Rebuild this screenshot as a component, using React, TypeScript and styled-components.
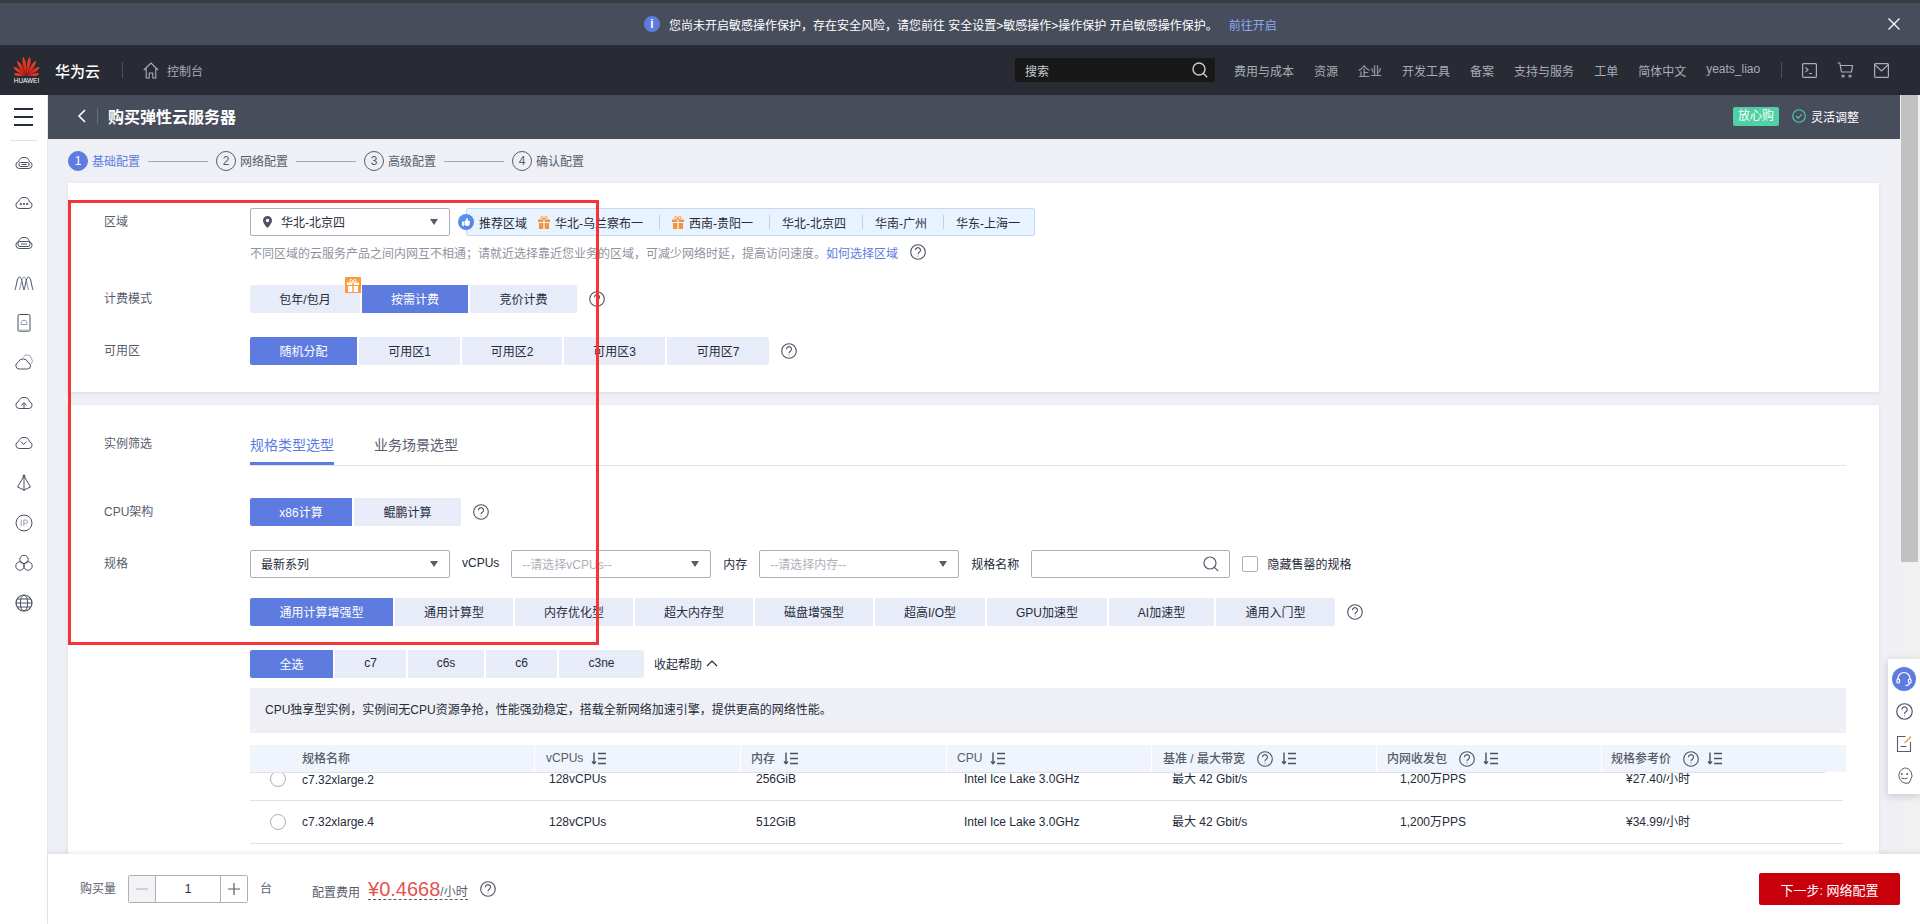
import React from 'react';
import { FaThumbsUp } from 'react-icons/fa';
import styled, { createGlobalStyle } from 'styled-components';

const GlobalStyle = createGlobalStyle`
  html, body {
    margin: 0;
    padding: 0;
    height: 924px;
    overflow: hidden;
    background: #ffffff;
    font-family: "Liberation Sans", "Noto Sans CJK SC", sans-serif;
    font-size: 12px;
    color: #252b3a;
  }
  * { box-sizing: border-box; }
`;

const BLUE = '#5e7ce0';

const CloudOutline = () => (
  <path d="M5.2 15.5h9.6a3.4 3.4 0 0 0 .7-6.7 5.6 5.6 0 0 0-10.9-.2 3.5 3.5 0 0 0 .6 6.9z" />
);

const SideIcon: React.FC<{ children?: React.ReactNode }> = ({ children }) => (
  <svg width='20' height='20' viewBox='0 0 20 20' fill='none' stroke='#4a5060' strokeWidth='1'>
    {children}
  </svg>
);

const sideIcons: React.ReactNode[] = [
  <SideIcon key='a'>
    <CloudOutline />
    <rect x='5' y='9.5' width='10' height='4' rx='1.5' />
    <path d="M7.5 11.5h5" />
  </SideIcon>,
  <SideIcon key='b'>
    <CloudOutline />
    <circle cx='6.8' cy='11' r='.7' fill='#4a5060' />
    <circle cx='10' cy='11' r='.7' fill='#4a5060' />
    <circle cx='13.2' cy='11' r='.7' fill='#4a5060' />
  </SideIcon>,
  <SideIcon key='c'>
    <CloudOutline />
    <rect x='4' y='8.5' width='12' height='5' rx='2' />
    <path d="M7 11h6" />
  </SideIcon>,
  <SideIcon key='d'>
    <path d="M1 17C2.500 13 3 4 5.500 4S8.500 13 10 17" />
    <path d="M5.500 17C7 13 7.500 4 10 4S13 13 14.500 17" stroke='#7f8db0' />
    <path d="M10 17c1.500-4 2-13 4.500-13S17.500 13 19 17" />
  </SideIcon>,
  <SideIcon key='e'>
    <rect x='4' y='1.5' width='12' height='17' rx='1.5' />
    <path d="M4.500 17.500h11" stroke='#b8bcc6' strokeWidth='2' />
    <path d="M7 11.500h6v-1.200a3 3 0 0 0-6 0z" stroke='#8fa0c0' />
  </SideIcon>,
  <SideIcon key='f'>
    <path d="M5 16h8.500a3.300 3.300 0 0 0 .5-6.500 5.200 5.200 0 0 0-9.800-.3A3.500 3.500 0 0 0 5 16z" />
    <path d="M9 4.500a4.500 4.500 0 0 1 8.600 1.500 3.200 3.200 0 0 1-1 5" stroke='#9aa0ad' />
  </SideIcon>,
  <SideIcon key='g'>
    <CloudOutline />
    <path d="M10 15.500v-5M7.500 12.500l2.500-2.800 2.500 2.800" />
  </SideIcon>,
  <SideIcon key='h'>
    <CloudOutline />
    <path d="M9.500 11.500l3-3M7 8.500l2.500 3" />
  </SideIcon>,
  <SideIcon key='i'>
    <path d="M10 2v16M10 3L3.500 14l6.500 3 6.500-3z" />
    <circle cx='10' cy='3' r='1' fill='#4a5060' />
  </SideIcon>,
  <SideIcon key='j'>
    <circle cx='10' cy='10' r='8' />
    <path d="M7.200 7v6M9.800 13V7h2a1.700 1.700 0 0 1 0 3.400h-2" stroke='#9aa0ad' />
  </SideIcon>,
  <SideIcon key='k'>
    <circle cx='10' cy='6.5' r='4.2' />
    <circle cx='6' cy='13' r='4.2' />
    <circle cx='14' cy='13' r='4.2' />
  </SideIcon>,
  <SideIcon key='l'>
    <circle cx='10' cy='10' r='8' strokeWidth='1.2' />
    <ellipse cx='10' cy='10' rx='3.6' ry='8' />
    <path d="M2 10h16M3 6h14M3 14h14" />
  </SideIcon>,
];

const logoPetals = [
  { deg: -80, len: 12 },
  { deg: -56, len: 15 },
  { deg: -32, len: 17 },
  { deg: -10, len: 18.5 },
  { deg: 10, len: 18.5 },
  { deg: 32, len: 17 },
  { deg: 56, len: 15 },
  { deg: 80, len: 12 },
];

const HelpIcon: React.FC<{ size?: number }> = ({ size = 16 }) => (
  <HelpSvg width={size} height={size} viewBox='0 0 16 16' fill='none' stroke='#4d5261' strokeWidth='1.1'>
    <circle cx='8' cy='8' r='7.3' />
    <path d="M5.500 6.200a2.500 2.500 0 1 1 3.800 2.100c-.9.500-1.300 1-1.300 2" />
    <circle cx='8' cy='12' r='.5' fill='#4d5261' stroke='none' />
  </HelpSvg>
);

const SortIcon = () => (
  <SortSvg width='15' height='13' viewBox='0 0 15 13' fill='none' stroke='#4d5261' strokeWidth='1.4'>
    <path d="M3 .5v11M1 9.500l2 2.300 2-2.300" />
    <path d="M7 1.500h8M7 6.500h8M7 11.500h8" />
  </SortSvg>
);

const GiftIcon: React.FC<{ color?: string }> = ({ color = '#f7923a' }) => (
  <svg width='12' height='13' viewBox='0 0 12 13' fill={color}>
    <path d="M0 3.500h5.300V6H0zM6.700 3.500H12V6H6.700zM1 7h4.300v6H1zM6.700 7H11v6H6.700z" />
    <path d="M6 3.200C4.500 3.200 2.800 2.800 2.800 1.500 2.800.4 4 0 4.700.5 5.500 1 6 2.200 6 3.200zm0 0c1.500 0 3.200-.4 3.200-1.700C9.200.4 8 0 7.300.5 6.500 1 6 2.200 6 3.200z" fill='none' stroke={color} />
  </svg>
);

const Caret = styled.span`
  width: 0;
  height: 0;
  margin: 2px 0 0 auto;
  border-left: 4px solid transparent;
  border-right: 4px solid transparent;
  border-top: 6px solid #575d6c;
`;

const SelectBox: React.FC<{ width: number; placeholder?: boolean; icon?: boolean; children: React.ReactNode }> = ({
  width,
  placeholder,
  icon,
  children,
}) => (
  <Select $width={width} $placeholder={placeholder}>
    {icon && (
      <PinIcon width='9' height='12' viewBox='0 0 9 12'>
        <path fillRule='evenodd' fill='#4d5261' d="M4.500 0A4.500 4.500 0 0 0 0 4.500C0 7.500 4.500 12 4.500 12S9 7.500 9 4.500A4.500 4.500 0 0 0 4.500 0zm0 6.200a1.700 1.700 0 1 1 0-3.400 1.700 1.700 0 0 1 0 3.400z" />
      </PinIcon>
    )}
    {children}
    <Caret />
  </Select>
);

interface OptionGroupProps {
  items: [string, number][];
  active?: number;
}

const OptionGroup: React.FC<OptionGroupProps> = ({ items, active = 0 }) => (
  <Options>
    {items.map(([label, width], i) => (
      <OptionButton key={label} $width={width} $active={i === active}>
        {label}
      </OptionButton>
    ))}
  </Options>
);

const columns = [
  { title: '规格名称', pad: 52, sort: false, help: false },
  { title: 'vCPUs', pad: 11, sort: true, help: false },
  { title: '内存', pad: 10, sort: true, help: false },
  { title: 'CPU', pad: 10, sort: true, help: false },
  { title: '基准 / 最大带宽', pad: 11, sort: true, help: true },
  { title: '内网收发包', pad: 10, sort: true, help: true },
  { title: '规格参考价', pad: 9, sort: true, help: true },
];

const rows = [
  { name: 'c7.32xlarge.2', memory: '256GiB', price: '¥27.40/小时', clipped: true },
  { name: 'c7.32xlarge.4', memory: '512GiB', price: '¥34.99/小时', clipped: false },
];

const steps = ['基础配置', '网络配置', '高级配置', '确认配置'];
const navItems = ['费用与成本', '资源', '企业', '开发工具', '备案', '支持与服务', '工单', '简体中文', 'yeats_liao'];

export default function App() {
  return (
    <Page>
      <GlobalStyle />
      <TopStrip />
      <Notice>
        <InfoDot>i</InfoDot>
        您尚未开启敏感操作保护，存在安全风险，请您前往 安全设置&gt;敏感操作&gt;操作保护 开启敏感操作保护。
        <NoticeLink>前往开启</NoticeLink>
        <CloseIcon width='12' height='12' viewBox='0 0 12 12' stroke='#ffffff' strokeWidth='1.3'>
          <path d="M.5.500l11 11M11.500.500l-11 11" />
        </CloseIcon>
      </Notice>
      <Header>
        <Logo>
          <svg width='27' height='20' viewBox='0 0 27 20'>
            <defs>
              <linearGradient id='petal' x1='0' y1='0' x2='0' y2='1'>
                <stop offset='0' stopColor='#f0492f' />
                <stop offset='1' stopColor='#c9140f' />
              </linearGradient>
            </defs>
            {logoPetals.map(({ deg, len }) => (
              <path
                key={deg}
                transform={`rotate(${deg} 13.5 20) translate(0 -1)`}
                d={`M13.5 20.5C11.4 ${20 - len * 0.55} 11.4 ${20 - len * 0.75} 13.5 ${20 - len}C15.6 ${20 - len * 0.75} 15.6 ${20 - len * 0.55} 13.5 20.5z`}
                fill='url(#petal)'
              />
            ))}
          </svg>
          <LogoWord>HUAWEI</LogoWord>
        </Logo>
        <Brand>华为云</Brand>
        <HeaderRule />
        <svg width='16' height='17' viewBox='0 0 16 17' fill='none' stroke='#a9adb8' strokeWidth='1.1'>
          <path d="M.8 8L8 1l7.200 7M3.200 6v10h3v-5h3.600v5h3V6" />
        </svg>
        <ConsoleLink>控制台</ConsoleLink>
        <HeaderSearch>
          搜索
          <svg width='16' height='16' viewBox='0 0 16 16' fill='none' stroke='#c9ccd3' strokeWidth='1.4'>
            <circle cx='7' cy='7' r='6' />
            <path d="M11.200 11.200l4 4" />
          </svg>
        </HeaderSearch>
        <HeaderNav>
          {navItems.map((item) => (
            <span key={item}>{item}</span>
          ))}
        </HeaderNav>
        <HeaderRuleRight />
        <HeaderIcons>
          <svg width='15' height='15' viewBox='0 0 15 15' fill='none' stroke='#a9adb8' strokeWidth='1.2'>
            <rect x='.6' y='.6' width='13.8' height='13.8' rx='1' />
            <path d="M3.500 4.500l2.500 2.300-2.500 2.300M7 10.500h3" />
          </svg>
          <svg width='17' height='16' viewBox='0 0 17 16' fill='none' stroke='#a9adb8' strokeWidth='1.2'>
            <path d="M.5 1h2.300l1.700 9h10l1-6.500H3.500" />
            <circle cx='6' cy='14' r='1' />
            <circle cx='13' cy='14' r='1' />
          </svg>
          <svg width='15' height='15' viewBox='0 0 15 15' fill='none' stroke='#a9adb8' strokeWidth='1.2'>
            <rect x='.6' y='.6' width='13.8' height='13.8' rx='1' />
            <path d="M.6 1.500l6.900 6.500 6.900-6.500" />
          </svg>
        </HeaderIcons>
      </Header>
      <Body>
        <Sidebar>
          <MenuButton>
            <MenuLine />
            <MenuLine />
            <MenuLine />
          </MenuButton>
          <SideList>{sideIcons}</SideList>
        </Sidebar>
        <Workspace>
          <Upper>
            <Main>
              <TitleBar>
                <svg width='9' height='14' viewBox='0 0 9 14' fill='none' stroke='#ffffff' strokeWidth='1.6'>
                  <path d="M8 1L2 7l6 6" />
                </svg>
                <TitleRule />
                <Title>购买弹性云服务器</Title>
                <SafeBadge>放心购</SafeBadge>
                <svg width='14' height='14' viewBox='0 0 14 14' fill='none' stroke='#4fd1a5' strokeWidth='1.1'>
                  <circle cx='7' cy='7' r='6.3' />
                  <path d="M4 7l2.200 2.200L10 5" />
                </svg>
                <FlexAdjust>灵活调整</FlexAdjust>
              </TitleBar>
              <Content>
                <Stepper>
                  {steps.map((step, i) => (
                    <React.Fragment key={step}>
                      <StepDot $active={i === 0}>{i + 1}</StepDot>
                      <StepLabel $active={i === 0}>{step}</StepLabel>
                      {i < steps.length - 1 && <StepLine />}
                    </React.Fragment>
                  ))}
                </Stepper>
                <Card>
                  <FormRow>
                    <FieldLabel>区域</FieldLabel>
                    <SelectBox width={200} icon>
                      华北-北京四
                    </SelectBox>
                    <ThumbDot>
                      <FaThumbsUp size={8} color='#ffffff' />
                    </ThumbDot>
                    <Recommend>
                      <RecommendTitle>推荐区域</RecommendTitle>
                      <GiftIcon />
                      <RegionText>华北-乌兰察布一</RegionText>
                      <RegionRule />
                      <GiftIcon />
                      <RegionText>西南-贵阳一</RegionText>
                      <RegionRule />
                      <RegionText>华北-北京四</RegionText>
                      <RegionRule />
                      <RegionText>华南-广州</RegionText>
                      <RegionRule />
                      <RegionText>华东-上海一</RegionText>
                    </Recommend>
                  </FormRow>
                  <HintRow>
                    不同区域的云服务产品之间内网互不相通；请就近选择靠近您业务的区域，可减少网络时延，提高访问速度。
                    <HintLink>如何选择区域</HintLink>
                    <HelpIcon />
                  </HintRow>
                  <FormRow $top={23}>
                    <FieldLabel>计费模式</FieldLabel>
                    <GiftAnchor>
                      <OptionGroup
                        active={1}
                        items={[
                          ['包年/包月', 110],
                          ['按需计费', 106],
                          ['竞价计费', 107],
                        ]}
                      />
                      <GiftBadge>
                        <GiftIcon color='#ffffff' />
                      </GiftBadge>
                    </GiftAnchor>
                    <HelpIcon />
                  </FormRow>
                  <FormRow $top={24}>
                    <FieldLabel>可用区</FieldLabel>
                    <OptionGroup
                      items={[
                        ['随机分配', 107],
                        ['可用区1', 101],
                        ['可用区2', 100],
                        ['可用区3', 101],
                        ['可用区7', 102],
                      ]}
                    />
                    <HelpIcon />
                  </FormRow>
                </Card>
                <ClippedCard>
                  <TabRow>
                    <TabLabel>实例筛选</TabLabel>
                    <Tabs>
                      <Tab $active>规格类型选型</Tab>
                      <Tab>业务场景选型</Tab>
                    </Tabs>
                  </TabRow>
                  <FormRow $top={32}>
                    <FieldLabel>CPU架构</FieldLabel>
                    <OptionGroup
                      items={[
                        ['x86计算', 102],
                        ['鲲鹏计算', 107],
                      ]}
                    />
                    <HelpIcon />
                  </FormRow>
                  <FormRow $top={24}>
                    <FieldLabel>规格</FieldLabel>
                    <SelectBox width={200}>最新系列</SelectBox>
                    <InlineLabel>vCPUs</InlineLabel>
                    <SelectBox width={200} placeholder>
                      --请选择vCPUs--
                    </SelectBox>
                    <InlineLabel>内存</InlineLabel>
                    <SelectBox width={200} placeholder>
                      --请选择内存--
                    </SelectBox>
                    <InlineLabel>规格名称</InlineLabel>
                    <SearchInput>
                      <svg width='16' height='16' viewBox='0 0 16 16' fill='none' stroke='#575d6c' strokeWidth='1.2'>
                        <circle cx='7' cy='7' r='6' />
                        <path d="M11.200 11.200l4 4" />
                      </svg>
                    </SearchInput>
                    <CheckBox />
                    <InlineText>隐藏售罄的规格</InlineText>
                  </FormRow>
                  <FormRow $top={20}>
                    <FieldLabel />
                    <OptionGroup
                      items={[
                        ['通用计算增强型', 143],
                        ['通用计算型', 118],
                        ['内存优化型', 118],
                        ['超大内存型', 118],
                        ['磁盘增强型', 118],
                        ['超高I/O型', 110],
                        ['GPU加速型', 120],
                        ['AI加速型', 105],
                        ['通用入门型', 119],
                      ]}
                    />
                    <HelpIcon />
                  </FormRow>
                  <FormRow $top={24}>
                    <FieldLabel />
                    <OptionGroup
                      items={[
                        ['全选', 83],
                        ['c7', 71],
                        ['c6s', 76],
                        ['c6', 71],
                        ['c3ne', 85],
                      ]}
                    />
                    <CollapseLink>
                      收起帮助
                      <svg width='12' height='7' viewBox='0 0 12 7' fill='none' stroke='#252b3a' strokeWidth='1.2'>
                        <path d="M1 6l5-5 5 5" />
                      </svg>
                    </CollapseLink>
                  </FormRow>
                  <InfoBox>CPU独享型实例，实例间无CPU资源争抢，性能强劲稳定，搭载全新网络加速引擎，提供更高的网络性能。</InfoBox>
                  <Table>
                    <TableHead>
                      {columns.map((col) => (
                        <HeadCell key={col.title} $pad={col.pad}>
                          {col.title}
                          {col.help && <HelpIcon />}
                          {col.sort && <SortIcon />}
                        </HeadCell>
                      ))}
                    </TableHead>
                    <HeadRule />
                    {rows.map((row) => (
                      <TableRow key={row.name} $clipped={row.clipped}>
                        <NameCell>
                          <Radio $clipped={row.clipped} />
                          {row.name}
                        </NameCell>
                        <BodyCell $pad={15}>128vCPUs</BodyCell>
                        <BodyCell $pad={16}>{row.memory}</BodyCell>
                        <BodyCell $pad={18}>Intel Ice Lake 3.0GHz</BodyCell>
                        <BodyCell $pad={21}>最大 42 Gbit/s</BodyCell>
                        <BodyCell $pad={24}>1,200万PPS</BodyCell>
                        <BodyCell $pad={25}>{row.price}</BodyCell>
                      </TableRow>
                    ))}
                  </Table>
                </ClippedCard>
              </Content>
            </Main>
            <ScrollTrack>
              <ScrollThumb />
            </ScrollTrack>
          </Upper>
          <Footer>
            <FooterLabel>购买量</FooterLabel>
            <Quantity>
              <QuantityButton $disabled>
                <svg width='12' height='2' viewBox='0 0 12 2' stroke='#adb0b8'>
                  <path d="M0 1h12" />
                </svg>
              </QuantityButton>
              <QuantityValue>1</QuantityValue>
              <QuantityButton>
                <svg width='12' height='12' viewBox='0 0 12 12' stroke='#575d6c' strokeWidth='1.2'>
                  <path d="M0 6h12M6 0v12" />
                </svg>
              </QuantityButton>
            </Quantity>
            <UnitLabel>台</UnitLabel>
            <CostLabel>配置费用</CostLabel>
            <Cost>
              <CostValue>¥0.4668</CostValue>
              <CostUnit>/小时</CostUnit>
            </Cost>
            <HelpIcon />
            <NextButton>下一步: 网络配置</NextButton>
          </Footer>
        </Workspace>
      </Body>
      <FloatPanel>
        <HeadsetDot>
          <svg width='16' height='16' viewBox='0 0 16 16' fill='none' stroke='#ffffff' strokeWidth='1.2'>
            <path d="M2 9V7.500a6 6 0 0 1 12 0V9" />
            <rect x='1' y='8' width='2.5' height='4' rx='1' />
            <rect x='12.5' y='8' width='2.5' height='4' rx='1' />
            <path d="M13.500 12c0 1.800-2 2.500-4 2.500" />
          </svg>
        </HeadsetDot>
        <HelpIcon size={17} />
        <svg width='16' height='17' viewBox='0 0 16 17' fill='none' stroke='#575d6c' strokeWidth='1.1'>
          <path d="M14.500 7v9.500h-13V1.500h8" />
          <path d="M15 1.500L8.500 8" stroke='#e8903c' />
          <path d="M4.500 11.500h6" />
        </svg>
        <svg width='17' height='17' viewBox='0 0 17 17' fill='none' stroke='#575d6c' strokeWidth='1'>
          <path d="M8.500 1a7.500 7.500 0 0 1 6 12l-1.500 3a7.500 7.500 0 1 1-4.500-15z" />
          <circle cx='5.8' cy='7' r='.6' fill='#575d6c' />
          <circle cx='11.2' cy='7' r='.6' fill='#575d6c' />
          <path d="M5.500 11c1.800 1 4.200 1 6 0" />
        </svg>
      </FloatPanel>
      <Annotation />
    </Page>
  );
}

const Page = styled.div`
  position: relative;
  display: flex;
  flex-direction: column;
  width: 1920px;
  height: 924px;
  overflow: hidden;
`;

const TopStrip = styled.div`
  height: 3px;
  background: #3a3b3f;
`;

const Notice = styled.div`
  position: relative;
  display: flex;
  align-items: center;
  height: 42px;
  padding-left: 644px;
  background: #484d5c;
  color: #ffffff;
`;

const InfoDot = styled.span`
  width: 16px;
  height: 16px;
  margin-right: 9px;
  border-radius: 50%;
  background: ${BLUE};
  color: #ffffff;
  font-weight: 700;
  line-height: 16px;
  text-align: center;
`;

const NoticeLink = styled.a`
  margin-left: 11px;
  color: #8ea9f5;
`;

const CloseIcon = styled.svg`
  position: absolute;
  top: 15px;
  left: 1888px;
`;

const Header = styled.header`
  display: flex;
  align-items: center;
  height: 50px;
  padding-left: 13px;
  background: #282b33;
  color: #a9adb8;
`;

const Logo = styled.div`
  display: flex;
  flex-direction: column;
  align-items: center;
  width: 27px;
`;

const LogoWord = styled.span`
  margin-top: 1px;
  color: #ffffff;
  font-size: 6.4px;
  line-height: 7px;
  white-space: nowrap;
`;

const Brand = styled.span`
  margin-left: 15px;
  color: #ffffff;
  font-size: 15px;
  font-weight: 500;
`;

const HeaderRule = styled.span`
  width: 1px;
  height: 16px;
  margin: 0 20px 0 22px;
  background: #4a4e5a;
`;

const ConsoleLink = styled.span`
  margin-left: 8px;
`;

const HeaderSearch = styled.div`
  display: flex;
  align-items: center;
  justify-content: space-between;
  width: 200px;
  height: 24px;
  margin-left: 812px;
  padding: 0 7px 0 10px;
  border-radius: 2px;
  background: #181818;
  color: #c9ccd3;
`;

const HeaderNav = styled.nav`
  display: flex;
  gap: 20px;
  margin-left: 19px;
  white-space: nowrap;
`;

const HeaderRuleRight = styled.span`
  width: 1px;
  height: 16px;
  margin: 0 20px 0 21px;
  background: #4a4e5a;
`;

const HeaderIcons = styled.div`
  display: flex;
  align-items: center;
  gap: 20px;
`;

const Body = styled.div`
  display: flex;
  flex: 1;
  min-height: 0;
`;

const Sidebar = styled.aside`
  flex: none;
  width: 48px;
  border-right: 1px solid #e6e8ef;
  background: #ffffff;
`;

const MenuButton = styled.div`
  display: flex;
  flex-direction: column;
  gap: 6px;
  height: 46px;
  margin: 0 10px;
  padding: 13px 4px 0;
  border-bottom: 1px solid #dfe1e6;
`;

const MenuLine = styled.span`
  height: 2px;
  background: #252b3a;
`;

const SideList = styled.div`
  display: flex;
  flex-direction: column;
  align-items: center;
  gap: 20px;
  padding-top: 12px;
`;

const Workspace = styled.div`
  display: flex;
  flex: 1;
  flex-direction: column;
  min-width: 0;
`;

const Upper = styled.div`
  display: flex;
  flex: 1;
  min-height: 0;
`;

const Main = styled.main`
  display: flex;
  flex: 1;
  flex-direction: column;
  min-width: 0;
`;

const ScrollTrack = styled.div`
  flex: none;
  width: 20px;
  padding: 0 2px 0 1px;
  background: #f1f1f1;
`;

const ScrollThumb = styled.div`
  height: 467px;
  background: #c1c1c1;
`;

const TitleBar = styled.div`
  display: flex;
  flex: none;
  align-items: center;
  height: 44px;
  padding: 0 0 2px 29px;
  background: #484d5c;
  color: #ffffff;
`;

const TitleRule = styled.span`
  width: 1px;
  height: 16px;
  margin: 0 10px 0 11px;
  background: #6b7080;
`;

const Title = styled.h1`
  margin: 0 0 1px;
  font-size: 16px;
  font-weight: 700;
`;

const SafeBadge = styled.span`
  width: 46px;
  height: 19px;
  margin: 0 13px 0 auto;
  border-radius: 2px;
  background: #4fd1a5;
  line-height: 19px;
  text-align: center;
`;

const FlexAdjust = styled.span`
  margin: 0 41px 0 5px;
`;

const Content = styled.div`
  flex: 1;
  min-height: 0;
  padding: 0 21px 0 20px;
  overflow: hidden;
  background: #eef0f5;
`;

const Stepper = styled.div`
  display: flex;
  align-items: center;
  height: 44px;
`;

const StepDot = styled.span<{ $active?: boolean }>`
  width: 20px;
  height: 20px;
  border: 1px solid ${(p) => (p.$active ? BLUE : '#575d6c')};
  border-radius: 50%;
  background: ${(p) => (p.$active ? BLUE : 'transparent')};
  color: ${(p) => (p.$active ? '#ffffff' : '#575d6c')};
  line-height: 18px;
  text-align: center;
`;

const StepLabel = styled.span<{ $active?: boolean }>`
  margin-left: 4px;
  padding-bottom: 2px;
  color: ${(p) => (p.$active ? BLUE : '#575d6c')};
`;

const StepLine = styled.span`
  width: 60px;
  height: 1px;
  margin: 0 8px;
  background: #a5a8b3;
`;

const Card = styled.section`
  padding: 25px 33px 27px 36px;
  background: #ffffff;
  box-shadow: 0 1px 3px rgba(37, 43, 58, 0.1);
`;

const ClippedCard = styled(Card)`
  height: 600px;
  margin-top: 13px;
  padding-top: 20px;
`;

const FormRow = styled.div<{ $top?: number }>`
  display: flex;
  align-items: center;
  margin-top: ${(p) => p.$top ?? 0}px;
  color: #252b3a;
`;

const FieldLabel = styled.label`
  flex: none;
  width: 146px;
  padding-bottom: 4px;
  color: #575d6c;
`;

const Select = styled.div<{ $width: number; $placeholder?: boolean }>`
  display: flex;
  flex: none;
  align-items: center;
  width: ${(p) => p.$width}px;
  height: 28px;
  padding: 0 11px 2px 10px;
  border: 1px solid #adb0b8;
  border-radius: 2px;
  background: #ffffff;
  color: ${(p) => (p.$placeholder ? '#adb0b8' : '#252b3a')};
`;

const PinIcon = styled.svg`
  margin: 2px 9px 0 2px;
`;

const ThumbDot = styled.span`
  position: relative;
  z-index: 1;
  display: flex;
  flex: none;
  align-items: center;
  justify-content: center;
  width: 16px;
  height: 16px;
  margin-left: 8px;
  border-radius: 50%;
  background: linear-gradient(135deg, #4f9cf7, ${BLUE});
`;

const Recommend = styled.div`
  display: flex;
  align-items: center;
  width: 569px;
  height: 28px;
  margin-left: -8px;
  padding-left: 12px;
  border: 1px solid #c2d9f7;
  border-radius: 2px;
  background: #e8f3ff;
  color: #252b3a;
`;

const RecommendTitle = styled.span`
  margin-right: 11px;
`;

const RegionText = styled.span`
  margin-left: 5px;
  white-space: nowrap;
`;

const RegionRule = styled.span`
  width: 1px;
  height: 14px;
  margin: 0 12px 0 16px;
  background: #c2d0e3;

  & + span {
    margin-left: 0;
  }
`;

const HintRow = styled.div`
  display: flex;
  align-items: center;
  height: 20px;
  margin: 6px 0 0 146px;
  color: #8f939e;
  white-space: nowrap;
`;

const HintLink = styled.a`
  color: ${BLUE};
`;

const HelpSvg = styled.svg`
  flex: none;
  margin-left: 12px;
`;

const SortSvg = styled.svg`
  flex: none;
  margin-left: 8px;
`;

const GiftAnchor = styled.div`
  position: relative;
`;

const GiftBadge = styled.span`
  position: absolute;
  top: -8px;
  left: 95px;
  display: flex;
  align-items: center;
  justify-content: center;
  width: 16px;
  height: 16px;
  background: #ff9a3c;
`;

const Options = styled.div`
  display: flex;
  gap: 2px;
`;

const OptionButton = styled.button<{ $width: number; $active?: boolean }>`
  flex: none;
  width: ${(p) => p.$width}px;
  height: 28px;
  padding: 0 0 2px;
  border: 0;
  background: ${(p) => (p.$active ? BLUE : '#e8ecf8')};
  color: ${(p) => (p.$active ? '#ffffff' : '#252b3a')};
  font: inherit;

  &:first-child {
    border-radius: 2px 0 0 2px;
  }

  &:last-child {
    border-radius: 0 2px 2px 0;
  }
`;

const TabRow = styled.div`
  display: flex;
`;

const TabLabel = styled(FieldLabel)`
  padding: 9px 0 0;
`;

const Tabs = styled.div`
  display: flex;
  flex: 1;
  gap: 40px;
  border-bottom: 1px solid #dfe1e6;
`;

const Tab = styled.span<{ $active?: boolean }>`
  height: 40px;
  border-bottom: 3px solid ${(p) => (p.$active ? BLUE : 'transparent')};
  color: ${(p) => (p.$active ? BLUE : '#575d6c')};
  font-size: 14px;
  line-height: 40px;
`;

const InlineLabel = styled.span`
  margin: 0 12px;
  padding-bottom: 2px;
  white-space: nowrap;
`;

const InlineText = styled.span`
  padding-bottom: 2px;
  white-space: nowrap;
`;

const SearchInput = styled.div`
  display: flex;
  flex: none;
  align-items: center;
  justify-content: flex-end;
  width: 199px;
  height: 28px;
  padding-right: 10px;
  border: 1px solid #adb0b8;
  border-radius: 2px;
`;

const CheckBox = styled.span`
  flex: none;
  width: 16px;
  height: 16px;
  margin: 0 9px 0 12px;
  border: 1px solid #adb0b8;
  border-radius: 2px;
`;

const CollapseLink = styled.span`
  display: flex;
  align-items: center;
  gap: 4px;
  margin-left: 10px;
  padding-bottom: 2px;
`;

const InfoBox = styled.div`
  height: 45px;
  margin: 10px 0 0 146px;
  padding-left: 15px;
  background: #eef0f5;
  color: #252b3a;
  line-height: 45px;
`;

const gridColumns = '284px 206px 206px 205px 225px 225px 246px';

const Table = styled.div`
  margin: 12px 0 0 146px;
`;

const TableHead = styled.div`
  display: grid;
  grid-template-columns: ${gridColumns};
  height: 27px;
  background: #f0f4fc;
  color: #575d6c;
  font-weight: 500;
`;

const HeadCell = styled.div<{ $pad: number }>`
  display: flex;
  align-items: center;
  padding: 0 0 2px ${(p) => p.$pad}px;
  border-left: 1px solid #ffffff;
  white-space: nowrap;

  &:first-child {
    border-left: 0;
  }

  & svg {
    margin-top: 2px;
  }
`;

const HeadRule = styled.div`
  width: 1575px;
  height: 1px;
  background: #dfe1e6;
`;

const TableRow = styled.div<{ $clipped?: boolean }>`
  display: grid;
  grid-template-columns: ${gridColumns};
  align-items: ${(p) => (p.$clipped ? 'start' : 'center')};
  width: 1593px;
  height: ${(p) => (p.$clipped ? 28 : 43)}px;
  overflow: hidden;
  border-bottom: 1px solid #dfe1e6;
  line-height: ${(p) => (p.$clipped ? '12px' : '14px')};
`;

const NameCell = styled.div`
  display: flex;
  align-items: center;
  padding-left: 20px;
`;

const Radio = styled.span<{ $clipped?: boolean }>`
  flex: none;
  width: 16px;
  height: 16px;
  margin: ${(p) => (p.$clipped ? '-2px' : '0')} 16px 0 0;
  border: 1px solid #adb0b8;
  border-radius: 50%;
`;

const BodyCell = styled.div<{ $pad: number }>`
  padding-left: ${(p) => p.$pad}px;
  white-space: nowrap;
`;

const Footer = styled.footer`
  position: relative;
  z-index: 2;
  display: flex;
  flex: none;
  align-items: center;
  height: 70px;
  padding-left: 32px;
  background: #ffffff;
  box-shadow: 0 -2px 4px rgba(37, 43, 58, 0.08);
  color: #575d6c;
`;

const FooterLabel = styled.span`
  margin-right: 12px;
  padding-bottom: 3px;
`;

const Quantity = styled.div`
  display: flex;
  width: 120px;
  height: 28px;
  border: 1px solid #adb0b8;
  border-radius: 2px;
`;

const QuantityButton = styled.span<{ $disabled?: boolean }>`
  display: flex;
  flex: none;
  align-items: center;
  justify-content: center;
  width: 26px;
  background: ${(p) => (p.$disabled ? '#f3f3f5' : '#ffffff')};
`;

const QuantityValue = styled.span`
  flex: 1;
  border-left: 1px solid #adb0b8;
  border-right: 1px solid #adb0b8;
  color: #252b3a;
  line-height: 26px;
  text-align: center;
`;

const UnitLabel = styled.span`
  margin-left: 12px;
  padding-bottom: 3px;
`;

const CostLabel = styled.span`
  margin: 4px 8px 0 40px;
`;

const Cost = styled.div`
  display: flex;
  align-items: baseline;
  border-bottom: 1px dashed #575d6c;
`;

const CostValue = styled.span`
  color: #e8504f;
  font-size: 20px;
  line-height: 20px;
`;

const CostUnit = styled.span`
  color: #575d6c;
`;

const NextButton = styled.button`
  width: 141px;
  height: 32px;
  margin: 0 20px 0 auto;
  padding: 0;
  border: 0;
  border-radius: 2px;
  background: #c7000b;
  color: #ffffff;
  font: inherit;
  font-size: 13px;
`;

const FloatPanel = styled.div`
  position: absolute;
  top: 659px;
  right: 0;
  z-index: 3;
  display: flex;
  flex-direction: column;
  align-items: center;
  gap: 15px;
  width: 32px;
  height: 135px;
  padding-top: 8px;
  background: #ffffff;
  box-shadow: 0 2px 8px rgba(37, 43, 58, 0.2);

  & svg {
    margin: 0;
  }
`;

const HeadsetDot = styled.span`
  display: flex;
  align-items: center;
  justify-content: center;
  width: 24px;
  height: 24px;
  margin-bottom: -3px;
  border-radius: 50%;
  background: ${BLUE};
`;

const Annotation = styled.div`
  position: absolute;
  top: 200px;
  left: 68px;
  z-index: 4;
  width: 531px;
  height: 445px;
  border: 3px solid #f73434;
  pointer-events: none;
`;
